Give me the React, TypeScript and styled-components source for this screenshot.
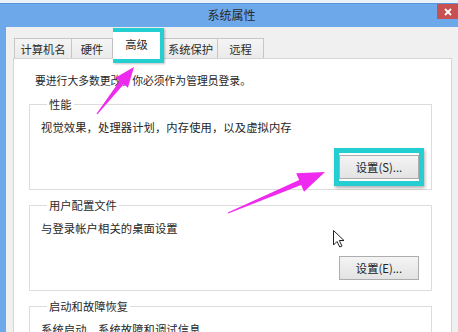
import styled, { createGlobalStyle, css } from 'styled-components';

const GlobalStyle = createGlobalStyle`
  html, body {
    margin: 0;
    padding: 0;
  }
  body {
    width: 458px;
    height: 332px;
    overflow: hidden;
    background: #eaf1f8;
    font-family: 'Noto Sans CJK SC', 'Microsoft YaHei', sans-serif;
    color: #262626;
  }
`;

const Screen = styled.div`
  position: relative;
  width: 458px;
  height: 332px;
  padding-top: 3px;
  box-sizing: border-box;
  overflow: hidden;
`;

const Window = styled.div`
  height: 100%;
  display: flex;
  flex-direction: column;
  background: #6ca8ea;
  border-top: 1px solid #5a94d8;
`;

const TitleBar = styled.div`
  display: grid;
  grid-template-columns: 21px 1fr 21px;
  align-items: start;
  height: 23px;
`;

const Title = styled.div`
  grid-column: 2;
  text-align: center;
  padding-left: 5px;
  font-size: 12px;
  line-height: 22px;
  color: #2a2a2a;
`;

const CloseButton = styled.div`
  grid-column: 3;
  height: 15px;
  display: flex;
  align-items: center;
  justify-content: center;
  background: #c75050;
`;

const Body = styled.div`
  flex: 1;
  min-height: 0;
  margin-left: 6px;
  padding-top: 1px;
  display: flex;
  flex-direction: column;
  background: #f0f0f0;
`;

const TabRow = styled.div`
  display: flex;
  align-items: flex-end;
  padding-left: 8px;
`;

const Tab = styled.div<{ $w: number; $active?: boolean }>`
  box-sizing: border-box;
  width: ${(p) => p.$w}px;
  height: 20px;
  display: flex;
  align-items: center;
  justify-content: center;
  border: 1px solid #c6c6c6;
  border-bottom: none;
  background: linear-gradient(#f4f4f4, #ebebeb);
  font-size: 11.3px;
  line-height: 16px;
  color: #2a2a2a;

  & + & {
    border-left: none;
  }

  ${(p) =>
    p.$active &&
    css`
      position: relative;
      z-index: 1;
      height: 35px;
      margin-bottom: -5px;
      padding-bottom: 3px;
      background: #fff;
      border: 4px solid #25ced1;
      box-shadow: 1px 1px 2px rgba(0, 0, 0, 0.25);
      & + & {
        border-left: 4px solid #25ced1;
      }
    `}
`;

const Panel = styled.div`
  flex: 1;
  margin: 0 6px 0 7px;
  padding: 13px 19px 0 15px;
  display: flex;
  flex-direction: column;
  gap: 7px;
  background: #fff;
  border: 1px solid #d5d5d5;
`;

const Intro = styled.div`
  padding-left: 6px;
  margin-bottom: 1px;
  font-size: 10.8px;
  line-height: 16px;
`;

const Group = styled.fieldset`
  margin: 0;
  min-width: 0;
  padding: 7px 12px 10px 11px;
  border: 1px solid #dcdcdc;
  flex-shrink: 0;
`;

const Legend = styled.legend`
  margin-left: 6px;
  padding: 0 2px;
  font-size: 11.3px;
  line-height: 16px;
  color: #2a2a2a;
`;

const Desc = styled.div`
  font-size: 11.3px;
  line-height: 16px;
  letter-spacing: 0.1px;
`;

const ButtonRow = styled.div`
  display: flex;
  justify-content: flex-end;
  margin-top: 20px;
`;

const Button = styled.button<{ $highlight?: boolean }>`
  box-sizing: border-box;
  width: 80px;
  height: 24px;
  padding: 0;
  border: 1px solid #adadad;
  background: linear-gradient(#f4f4f4, #e3e3e3);
  font-family: inherit;
  font-size: 11.3px;
  color: #222;

  ${(p) =>
    p.$highlight &&
    css`
      position: relative;
      &::after {
        content: '';
        position: absolute;
        top: -8px;
        bottom: -8px;
        left: -6px;
        right: -6px;
        border: 5px solid #25ced1;
        box-shadow: 1px 2px 3px rgba(0, 0, 0, 0.3);
      }
    `}
`;

const Overlay = styled.svg`
  position: absolute;
  left: 0;
  top: 0;
  pointer-events: none;
`;

type Pt = [number, number];

const Arrow = ({ tail, tip, head, half }: { tail: Pt; tip: Pt; head: number; half: number }) => {
  const dx = tip[0] - tail[0];
  const dy = tip[1] - tail[1];
  const len = Math.hypot(dx, dy);
  const ux = dx / len;
  const uy = dy / len;
  const nx = -uy;
  const ny = ux;
  const bx = tip[0] - ux * head;
  const by = tip[1] - uy * head;
  const shaft = 2.6;
  const pts: Pt[] = [
    [tail[0] + nx * 0.6, tail[1] + ny * 0.6],
    [bx + nx * shaft, by + ny * shaft],
    [bx + nx * half, by + ny * half],
    tip,
    [bx - nx * half, by - ny * half],
    [bx - nx * shaft, by - ny * shaft],
    [tail[0] - nx * 0.6, tail[1] - ny * 0.6],
  ];
  return <polygon points={pts.map((p) => p.join(',')).join(' ')} fill="#ee2aee" />;
};

const tabs = [
  { label: '计算机名', w: 58 },
  { label: '硬件', w: 41 },
  { label: '高级', w: 51, active: true },
  { label: '系统保护', w: 54 },
  { label: '远程', w: 46 },
];

const App = () => {
  return (
    <Screen>
      <GlobalStyle />
      <Window>
        <TitleBar>
          <Title>系统属性</Title>
          <CloseButton>
            <svg width="8" height="8" viewBox="0 0 8 8">
              <path d="M1 1 L7 7 M7 1 L1 7" stroke="#fff" strokeWidth="1.8" />
            </svg>
          </CloseButton>
        </TitleBar>
        <Body>
          <TabRow>
            {tabs.map((t) => (
              <Tab key={t.label} $w={t.w} $active={t.active}>
                {t.label}
              </Tab>
            ))}
          </TabRow>
          <Panel>
            <Intro>要进行大多数更改，你必须作为管理员登录。</Intro>
            <Group>
              <Legend>性能</Legend>
              <Desc>视觉效果，处理器计划，内存使用，以及虚拟内存</Desc>
              <ButtonRow>
                <Button $highlight>设置(S)...</Button>
              </ButtonRow>
            </Group>
            <Group>
              <Legend>用户配置文件</Legend>
              <Desc>与登录帐户相关的桌面设置</Desc>
              <ButtonRow>
                <Button>设置(E)...</Button>
              </ButtonRow>
            </Group>
            <Group>
              <Legend>启动和故障恢复</Legend>
              <Desc>系统启动、系统故障和调试信息</Desc>
            </Group>
          </Panel>
        </Body>
      </Window>
      <Overlay width="458" height="332" viewBox="0 0 458 332">
        <Arrow tail={[97, 114]} tip={[134, 67]} head={20} half={8} />
        <Arrow tail={[228, 213]} tip={[325, 172]} head={27} half={10} />
        <g transform="translate(333 230)">
          <path
            d="M0.5 0.5 L0.5 15 L4 11.5 L6.8 17 L9 16 L6.3 10.5 L11 10.5 Z"
            fill="#fff"
            stroke="#222"
            strokeWidth="1"
            strokeLinejoin="round"
          />
        </g>
      </Overlay>
    </Screen>
  );
};

export default App;
